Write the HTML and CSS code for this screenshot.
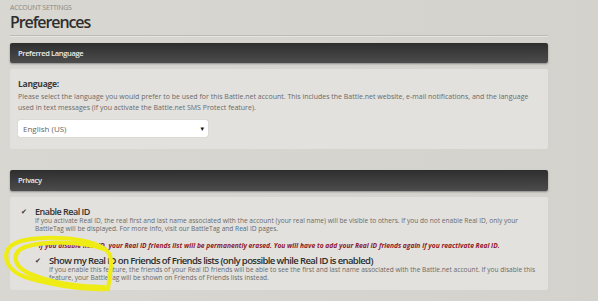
FILE: index.html
```html
<!DOCTYPE html>
<html>
<head>
<meta charset="utf-8">
<link rel="stylesheet" href="styles.css">
</head>
<body>
<div class="page">
  <div class="crumb">ACCOUNT SETTINGS</div>
  <h1 class="title">Preferences</h1>
  <div class="rule"></div>

  <div class="bar">Preferred Language</div>
  <div class="panel panel-lang">
    <div class="label">Language:</div>
    <p class="desc-lang">Please select the language you would prefer to be used for this Battle.net account. This includes the Battle.net website, e-mail notifications, and the language<br>used in text messages (If you activate the Battle.net SMS Protect feature).</p>
    <div class="select"><span>English (US)</span><span class="arrow">&#9662;</span></div>
  </div>

  <div class="bar bar-privacy">Privacy</div>
  <div class="panel panel-privacy">
    <div class="option">
      <span class="check">&#10004;</span>
      <div class="opt-body">
        <div class="opt-title">Enable Real ID</div>
        <p class="opt-desc">If you activate Real ID, the real first and last name associated with the account (your real name) will be visible to others. If you do not enable Real ID, only your<br>BattleTag will be displayed. For more info, visit our BattleTag and <span class="link">Real ID</span> pages.</p>
        <p class="warn">*If you disable Real ID, your Real ID friends list will be permanently erased. You will have to add your Real ID friends again if you reactivate Real ID.</p>
      </div>
    </div>
    <div class="option option-sub">
      <span class="check">&#10004;</span>
      <div class="opt-body">
        <div class="opt-title big">Show my Real ID on Friends of Friends lists (only possible while Real ID is enabled)</div>
        <p class="opt-desc">If you enable this feature, the friends of your Real ID friends will be able to see the first and last name associated with the Battle.net account. If you disable this<br>feature, your BattleTag will be shown on Friends of Friends lists instead.</p>
      </div>
    </div>
    <svg class="scribble" width="125" height="66" viewBox="0 0 125 66">
      <path d="M108 56 C85 57 50 52 25 44 C8 38 3 25 8 16 C14 6 40 4 60 5 C85 6 105 12 110 22 C113 32 109 45 108 56" fill="none" stroke="#eeec14" stroke-width="4.2" stroke-linecap="round"/>
      <path d="M104 16 C80 8 45 8 25 14 C12 19 12 32 28 40 C50 50 80 54 104 54" fill="none" stroke="#eeec14" stroke-width="4.2" stroke-linecap="round"/>
    </svg>
  </div>
</div>
</body>
</html>
```

FILE: styles.css
```css
html, body {
  margin: 0;
  padding: 0;
}
body {
  width: 598px;
  height: 301px;
  overflow: hidden;
  background: linear-gradient(90deg, #d8d7d2 0%, #d3d2cd 100%);
  font-family: "Open Sans", "DejaVu Sans", sans-serif;
  color: #555;
}
.page {
  width: 538px;
  padding: 4px 0 0 10px;
}
.crumb {
  font-size: 7px;
  line-height: 8px;
  color: #8a8a86;
  letter-spacing: -0.3px;
}
.title {
  margin: 0;
  font-size: 16px;
  line-height: 20px;
  font-weight: 600;
  color: #2e2e2e;
  letter-spacing: -1.1px;
}
.rule {
  margin-top: 3px;
  height: 1px;
  background: #bcbbb6;
  border-bottom: 1px solid #e6e5e1;
}
.bar {
  margin-top: 6px;
  height: 20px;
  line-height: 20px;
  padding-left: 8px;
  border-radius: 2px;
  background: linear-gradient(180deg, #2e2e2e 0%, #4c4c4c 100%);
  box-shadow: 0 1px 2px rgba(0,0,0,0.35);
  color: #ececec;
  font-size: 7.5px;
  font-weight: 600;
  letter-spacing: -0.35px;
}
.panel {
  margin-top: 6px;
  background: #e2e1de;
  border-radius: 2px;
  padding-left: 8px;
  position: relative;
}
.panel-lang {
  height: 80px;
  padding-top: 9px;
  box-sizing: border-box;
}
.label {
  font-size: 8.5px;
  line-height: 11px;
  font-weight: 700;
  color: #3a3a3a;
  letter-spacing: -0.25px;
}
.desc-lang {
  margin: 3px 0 0;
  font-size: 7px;
  line-height: 10.5px;
  color: #6a6a68;
  white-space: nowrap;
}
.select {
  margin-top: 7px;
  width: 190px;
  height: 17px;
  box-sizing: border-box;
  background: #fff;
  border-radius: 2px;
  box-shadow: 0 0 1px rgba(0,0,0,0.3);
  display: flex;
  align-items: center;
  justify-content: space-between;
  padding: 0 4px 0 5px;
  font-size: 8px;
  color: #666;
}
.arrow {
  font-size: 7px;
  color: #111;
}
.bar-privacy {
  margin-top: 21px;
  height: 21px;
  line-height: 21px;
}
.panel-privacy {
  height: 93px;
  box-sizing: border-box;
  padding-top: 9px;
}
.option {
  display: flex;
  align-items: flex-start;
}
.check {
  width: 9px;
  margin-left: 3px;
  margin-right: 5px;
  font-size: 7px;
  line-height: 11px;
  color: #333;
}
.opt-body {
  flex: 1;
}
.opt-title {
  font-size: 9px;
  line-height: 11px;
  font-weight: 600;
  color: #333;
  letter-spacing: -0.5px;
}
.opt-title.big {
  font-size: 9.5px;
  font-weight: 600;
  color: #2e2e2e;
  letter-spacing: -0.6px;
}
.opt-desc {
  margin: 0;
  font-size: 6.6px;
  line-height: 8px;
  color: #6a6a68;
  white-space: nowrap;
}
.link {
  color: #3d6fa0;
}
.warn {
  margin: 8px 0 0;
  font-size: 6.7px;
  line-height: 9px;
  font-style: italic;
  font-weight: 700;
  color: #8e1a2b;
  white-space: nowrap;
}
.option-sub {
  margin-top: 5px;
  padding-left: 14px;
}
.scribble {
  position: absolute;
  left: -10px;
  top: 36px;
}
```
